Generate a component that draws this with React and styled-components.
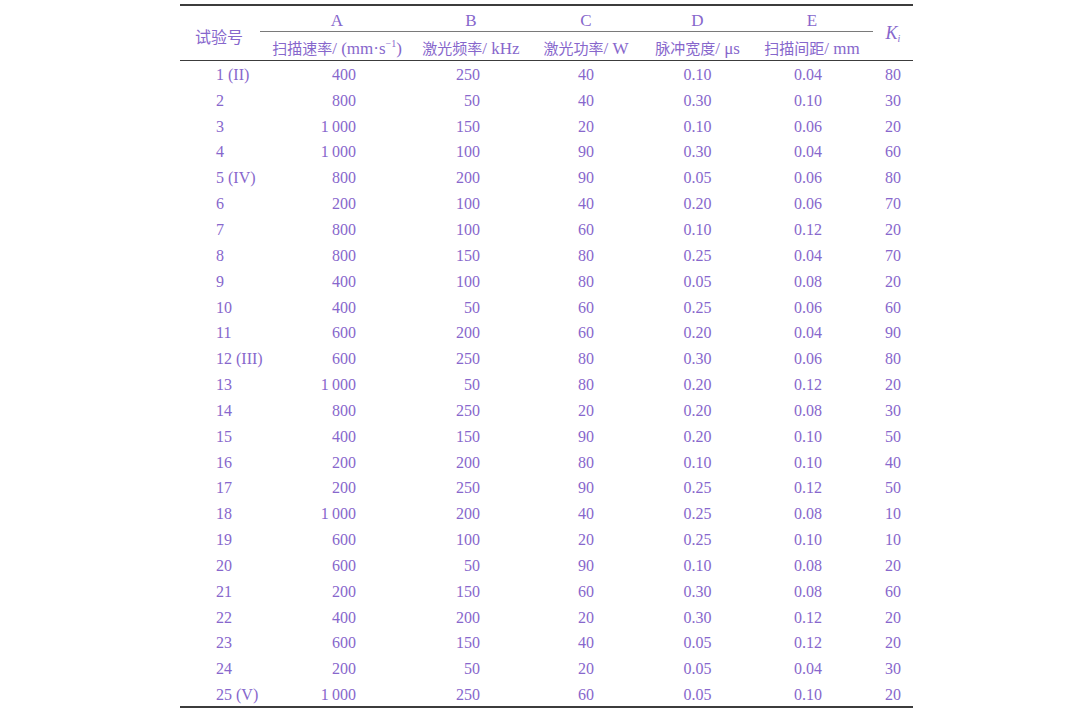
import styled, { createGlobalStyle } from "styled-components";

const GlobalStyle = createGlobalStyle`
  html, body {
    margin: 0;
    padding: 0;
    background: #ffffff;
  }
  body {
    font-family: "Liberation Serif", "Noto Sans CJK SC", serif;
  }
`;

const ink = "#8767cc";
const rule = "#3c3c3c";

const Page = styled.div`
  width: 1080px;
  height: 711px;
  padding-top: 4px;
  padding-left: 180px;
  box-sizing: border-box;
  overflow: hidden;
`;

const Table = styled.table`
  width: 733px;
  table-layout: fixed;
  border-collapse: collapse;
  color: ${ink};
  font-size: 16px;
  border-top: 2px solid ${rule};
  border-bottom: 2px solid ${rule};
`;

const Head = styled.thead`
  border-bottom: 1.5px solid ${rule};
`;

const Th = styled.th`
  font-weight: 400;
  padding: 0;
  text-align: center;
  white-space: nowrap;
  vertical-align: middle;
  line-height: 1;
`;

const Letter = styled(Th)`
  height: 21px;
  font-size: 17px;
  padding-top: 4px;
  border-bottom: 1px solid #7a7a7a;
`;

const Unit = styled(Th)`
  height: 24px;
  font-size: 17px;
  padding-top: 4px;
`;

const Side = styled(Th)`
  font-size: 16px;
  padding-top: 5px;
  padding-right: 2px;
  font-family: "Noto Sans CJK SC", sans-serif;
`;

const Cjk = styled.span`
  font-family: "Noto Sans CJK SC", sans-serif;
  font-size: 15px;
`;

const K = styled.span`
  display: inline-block;
  padding-top: 2px;
  font-style: italic;
  font-size: 18px;
  sub {
    font-size: 10px;
    vertical-align: -3px;
  }
`;

const Row = styled.tr`
  height: 25.85px;
`;

const Td = styled.td`
  padding: 3px ${(p) => p.$pr || 0}px 0 ${(p) => p.$pl || 0}px;
  text-align: ${(p) => p.$align || "center"};
  white-space: nowrap;
  vertical-align: middle;
  line-height: 1;
`;

const cols = [80, 154, 114, 116, 107, 122, 40];

const units = [
  ["扫描速率", <>/ (mm·s<sup style={{ fontSize: "10px" }}>−1</sup>)</>],
  ["激光频率", "/ kHz"],
  ["激光功率", "/ W"],
  ["脉冲宽度", "/ μs"],
  ["扫描间距", "/ mm"],
];

const rows = [
  ["1 (II)", "400", "250", "40", "0.10", "0.04", "80"],
  ["2", "800", "50", "40", "0.30", "0.10", "30"],
  ["3", "1\u2009000", "150", "20", "0.10", "0.06", "20"],
  ["4", "1\u2009000", "100", "90", "0.30", "0.04", "60"],
  ["5 (IV)", "800", "200", "90", "0.05", "0.06", "80"],
  ["6", "200", "100", "40", "0.20", "0.06", "70"],
  ["7", "800", "100", "60", "0.10", "0.12", "20"],
  ["8", "800", "150", "80", "0.25", "0.04", "70"],
  ["9", "400", "100", "80", "0.05", "0.08", "20"],
  ["10", "400", "50", "60", "0.25", "0.06", "60"],
  ["11", "600", "200", "60", "0.20", "0.04", "90"],
  ["12 (III)", "600", "250", "80", "0.30", "0.06", "80"],
  ["13", "1\u2009000", "50", "80", "0.20", "0.12", "20"],
  ["14", "800", "250", "20", "0.20", "0.08", "30"],
  ["15", "400", "150", "90", "0.20", "0.10", "50"],
  ["16", "200", "200", "80", "0.10", "0.10", "40"],
  ["17", "200", "250", "90", "0.25", "0.12", "50"],
  ["18", "1\u2009000", "200", "40", "0.25", "0.08", "10"],
  ["19", "600", "100", "20", "0.25", "0.10", "10"],
  ["20", "600", "50", "90", "0.10", "0.08", "20"],
  ["21", "200", "150", "60", "0.30", "0.08", "60"],
  ["22", "400", "200", "20", "0.30", "0.12", "20"],
  ["23", "600", "150", "40", "0.05", "0.12", "20"],
  ["24", "200", "50", "20", "0.05", "0.04", "30"],
  ["25 (V)", "1\u2009000", "250", "60", "0.05", "0.10", "20"],
];

// per-column cell alignment, tuned to the reference
const cellFmt = [
  { $align: "left", $pl: 36 },
  { $align: "right", $pr: 58 },
  { $align: "right", $pr: 48 },
  { $align: "center" },
  { $align: "center" },
  { $align: "center", $pr: 8 },
  { $align: "center" },
];

export default function App() {
  return (
    <>
      <GlobalStyle />
      <Page>
        <Table>
          <colgroup>
            {cols.map((w, i) => (
              <col key={i} style={{ width: w }} />
            ))}
          </colgroup>
          <Head>
            <tr>
              <Side rowSpan={2}>试验号</Side>
              {["A", "B", "C", "D", "E"].map((l) => (
                <Letter key={l}>{l}</Letter>
              ))}
              <Th rowSpan={2}>
                <K>
                  K<sub>i</sub>
                </K>
              </Th>
            </tr>
            <tr>
              {units.map(([zh, u], i) => (
                <Unit key={i}>
                  <Cjk>{zh}</Cjk>
                  {u}
                </Unit>
              ))}
            </tr>
          </Head>
          <tbody>
            {rows.map((r, i) => (
              <Row key={i}>
                {r.map((v, j) => (
                  <Td key={j} {...cellFmt[j]}>
                    {v}
                  </Td>
                ))}
              </Row>
            ))}
          </tbody>
        </Table>
      </Page>
    </>
  );
}
